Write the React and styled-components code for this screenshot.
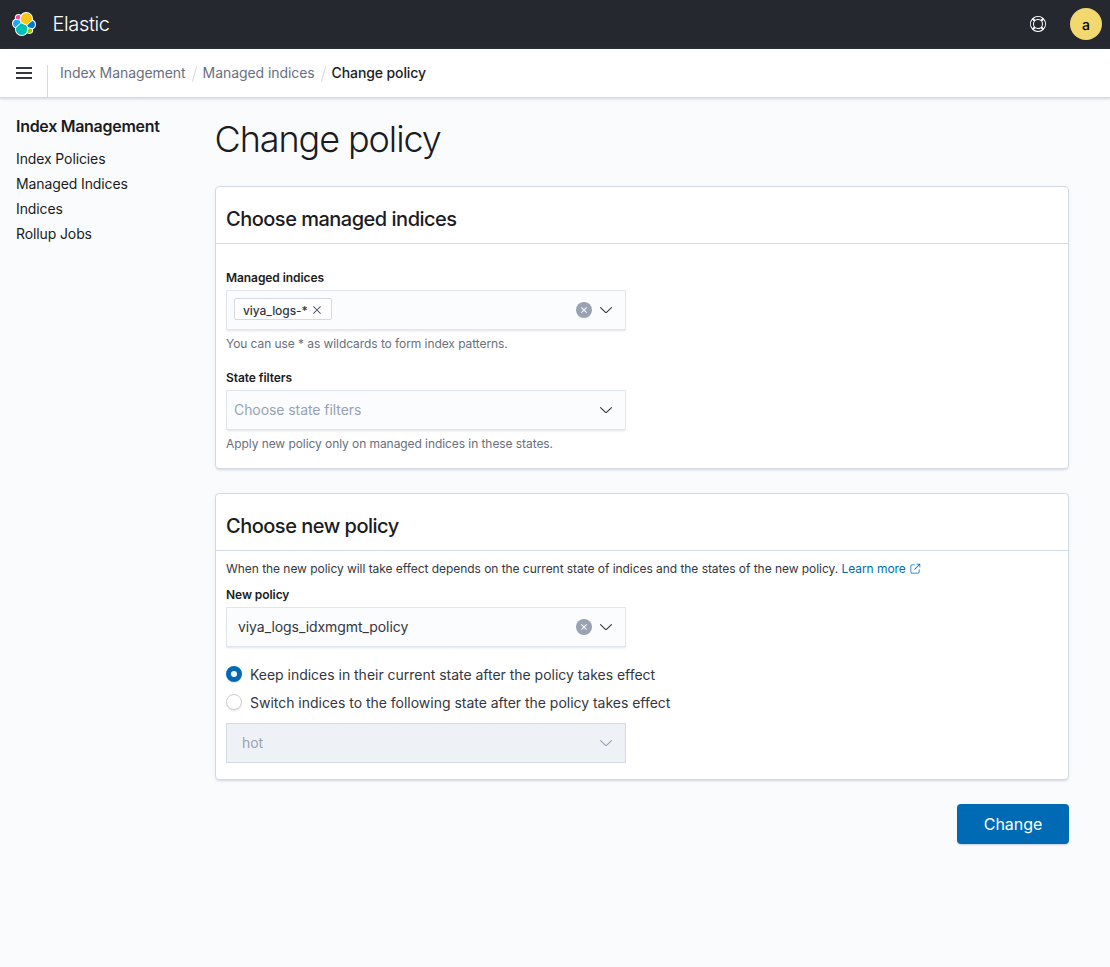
import React from "react";
import styled, { createGlobalStyle } from "styled-components";

const GlobalStyle = createGlobalStyle`
  *, *::before, *::after { box-sizing: border-box; }
  body {
    margin: 0;
    min-height: 100vh;
    background: #fafbfd;
    color: #343741;
    font-family: Inter, "Liberation Sans", sans-serif;
    font-size: 14px;
    letter-spacing: -0.005em;
    font-kerning: normal;
  }
  h1, h2, h3, p, ul { margin: 0; padding: 0; }
  button { font: inherit; letter-spacing: inherit; border: 0; padding: 0; background: none; cursor: pointer; }
`;

const TopBar = styled.header`
  height: 49px;
  background: #25282f;
  display: flex;
  align-items: center;
  padding: 0 8px 1px 12px;
`;

const Brand = styled.span`
  flex: 1;
  margin-left: 16.5px;
  font-size: 20px;
  font-weight: 300;
  line-height: 24px;
  letter-spacing: -0.018em;
  color: #fff;
`;

const Avatar = styled.span`
  width: 32px;
  height: 32px;
  margin-left: 24px;
  border-radius: 50%;
  background: #f1d86f;
  color: #000;
  font-weight: 500;
  line-height: 34px;
  text-align: center;
`;

const NavBar = styled.nav`
  height: 48px;
  background: #fff;
  display: flex;
  box-shadow: 0 1px 0 #d3dae6, 0 2px 2px rgba(152, 162, 179, 0.3), 0 1px 5px rgba(152, 162, 179, 0.2);
  position: relative;
`;

const MenuButton = styled.button`
  width: 48px;
  height: 32px;
  margin-top: 16px;
  padding: 0 0 16px 16px;
  border-right: 1px solid #d3dae6;
  display: flex;
  color: #343741;
`;

const Crumbs = styled.div`
  display: flex;
  align-items: center;
  height: 48px;
  padding-left: 12px;
`;

const Crumb = styled.span`
  margin-top: -1px;
  color: ${(p) => (p.$current ? "#1a1c21" : "#69707d")};
  font-weight: ${(p) => (p.$current ? 500 : 400)};
  letter-spacing: ${(p) => (p.$current ? "-0.008em" : "inherit")};
`;

const Slash = styled.span`
  width: 1px;
  height: 16px;
  margin: 1px 8px 0;
  background: #d3dae6;
  transform: rotate(15deg);
`;

const Page = styled.div`
  display: flex;
  padding: 18px 41px 0 16px;
`;

const Sidebar = styled.aside`
  width: 199px;
  flex: none;
`;

const SideTitle = styled.h3`
  font-size: 16px;
  font-weight: 600;
  line-height: 24px;
  letter-spacing: -0.018em;
  color: #1a1c21;
  margin: -1px 0 8px;
`;

const SideItem = styled.a`
  display: block;
  height: 25px;
  line-height: 25px;
  letter-spacing: -0.008em;
  color: #1a1c21;
`;

const Main = styled.main`
  flex: 1;
  display: flex;
  flex-direction: column;
`;

const PageTitle = styled.h1`
  font-size: 36px;
  font-weight: 300;
  line-height: 48px;
  letter-spacing: -0.03em;
  color: #1a1c21;
  margin: 0 0 23px -0.5px;
`;

const Panel = styled.section`
  height: ${(p) => p.$height}px;
  margin-bottom: 24px;
  border: 1px solid #d3dae6;
  border-radius: 4px;
  background: #fff;
  box-shadow: 0 2px 2px -1px rgba(152, 162, 179, 0.3), 0 1px 5px -2px rgba(152, 162, 179, 0.3);
`;

const PanelTitle = styled.h2`
  height: 57px;
  padding: 16px 10px 0;
  border-bottom: 1px solid #d3dae6;
  font-size: 20px;
  font-weight: 500;
  line-height: 32px;
  letter-spacing: -0.025em;
  color: #1a1c21;
`;

const PanelBody = styled.div`
  padding: ${(p) => p.$top}px 10px 0;
`;

const Note = styled.p`
  font-size: 12px;
  line-height: 18px;
  letter-spacing: -0.004em;
  margin-bottom: 8px;
`;

const Link = styled.a`
  color: #006bb4;
  svg { vertical-align: -2px; margin-left: -0.5px; }
`;

const Field = styled.div`
  width: 400px;
  margin-bottom: ${(p) => p.$gap || 16}px;
`;

const Label = styled.label`
  display: block;
  font-size: 12px;
  font-weight: 600;
  line-height: 18px;
  margin-bottom: 3px;
  color: #1a1c21;
`;

const Control = styled.div`
  width: 400px;
  height: 40px;
  padding: 0 11px 0 ${(p) => p.$indent}px;
  display: flex;
  align-items: center;
  gap: 6px;
  border: 1px solid ${(p) => (p.$disabled ? "#d3dae6" : "#e0e5ee")};
  background: ${(p) => (p.$disabled ? "#eef1f6" : "#fbfcfd")};
  color: ${(p) => (p.$disabled ? "#98a2b3" : "#343741")};
  box-shadow: ${(p) => (p.$disabled ? "none" : "0 2px 2px -1px rgba(152, 162, 179, 0.3)")};
`;

const Value = styled.span`
  flex: 1;
  margin-top: -1px;
  color: ${(p) => (p.$placeholder ? "#98a2b3" : "inherit")};
`;

const PillSlot = styled.div`
  flex: 1;
  display: flex;
`;

const Pill = styled.span`
  height: 22px;
  margin-top: -2px;
  padding: 2px 8px 0;
  display: flex;
  align-items: center;
  gap: 3px;
  border: 1px solid #d3dae6;
  border-radius: 2px;
  background: #fff;
  font-size: 12px;
  font-weight: 500;
  svg { margin-top: -1px; }
`;

const ClearButton = styled.button`
  width: 16px;
  height: 16px;
  border-radius: 50%;
  background: #98a2b3;
  color: #fff;
  display: flex;
  align-items: center;
  justify-content: center;
`;

const Help = styled.p`
  padding-top: 5px;
  font-size: 12px;
  line-height: 18px;
  color: #69707d;
`;

const Radios = styled.div`
  margin-bottom: 1px;
`;

const RadioRow = styled.label`
  height: 28px;
  display: flex;
  align-items: flex-start;
  gap: 8px;
  line-height: 18px;
  letter-spacing: -0.0015em;
`;

const RadioDot = styled.span`
  width: 16px;
  height: 16px;
  border-radius: 50%;
  border: ${(p) => (p.$checked ? "5px solid #006bb4" : "1px solid #c9cbcd")};
  background: #fff;
  box-shadow: 0 2px 2px -1px rgba(152, 162, 179, 0.3);
`;

const SubmitButton = styled.button`
  align-self: flex-end;
  width: 112px;
  height: 40px;
  border-radius: 4px;
  background: #006bb4;
  color: #fff;
  font-size: 16px;
  box-shadow: 0 2px 2px -1px rgba(54, 97, 126, 0.3);
`;

const logoParts = [
  ["#fec514", "M12.58 13.787l7.002 3.211 7.066-6.213a7.849 7.849 0 00.152-1.557c0-4.287-3.464-7.777-7.72-7.777a7.713 7.713 0 00-6.377 3.385L11.53 10.9l1.05 2.886z"],
  ["#00bfb3", "M5.333 21.215A7.853 7.853 0 005.18 22.8c0 4.3 3.473 7.797 7.742 7.797a7.724 7.724 0 006.407-3.424l1.166-6.118-1.557-2.996-7.03-3.224z"],
  ["#f04e98", "M5.288 9.067l4.8 1.143 1.05-5.497a3.8 3.8 0 00-2.296-.78 3.817 3.817 0 00-3.799 3.83c0 .445.084.888.245 1.304z"],
  ["#1ba9f5", "M4.87 10.214a5.324 5.324 0 00-3.541 5.026 5.343 5.343 0 003.418 4.985l6.734-6.138-1.236-2.664z"],
  ["#93c90e", "M20.872 27.173a3.781 3.781 0 002.283.779 3.817 3.817 0 003.799-3.83c0-.455-.08-.9-.244-1.322l-4.796-1.131z"],
  ["#07c", "M21.847 20.45l5.28 1.244a5.325 5.325 0 003.544-5.027 5.341 5.341 0 00-3.425-4.978l-6.906 6.092z"],
];

const Logo = () => (
  <svg width="24" height="24" viewBox="0 0 32 32">
    {logoParts.map(([fill, d]) => (
      <path key={fill} d={d} fill="#fff" stroke="#fff" strokeWidth="2.6" strokeLinejoin="round" />
    ))}
    {logoParts.map(([fill, d]) => (
      <path key={fill} d={d} fill={fill} />
    ))}
  </svg>
);

const iconPaths = {
  help: "M13.6 12.186l-1.357-1.358c-.025-.025-.058-.034-.084-.056.53-.794.84-1.746.84-2.773a4.977 4.977 0 00-.84-2.772c.026-.02.059-.03.084-.056L13.6 3.813a6.96 6.96 0 010 8.373zM8 15a6.956 6.956 0 01-4.186-1.4l1.358-1.358c.025-.025.035-.057.055-.084C6.02 12.688 6.974 13 8 13a4.978 4.978 0 002.773-.84c.02.026.03.058.056.083l1.357 1.358A6.956 6.956 0 018 15zm-5.601-2.813a6.963 6.963 0 010-8.373l1.359 1.358c.024.025.057.035.084.055A4.97 4.97 0 003 8c0 1.027.31 1.98.842 2.773-.027.02-.06.03-.084.055l-1.36 1.358zm5.6-.187A4 4 0 118 4a4 4 0 010 8zM8 1c1.573 0 3.019.525 4.187 1.4l-1.357 1.357c-.025.025-.035.057-.056.084A4.979 4.979 0 008 3a4.979 4.979 0 00-2.773.842c-.02-.027-.03-.06-.055-.084L3.814 2.4A6.957 6.957 0 018 1zm0-1a8.001 8.001 0 10.003 16.002A8.001 8.001 0 008 0z",
  menu: "M0 2h16v2H0zM0 7h16v2H0zM0 12h16v2H0z",
  arrowDown: "M13.069 5.157L8.384 9.768a.546.546 0 01-.768 0L2.93 5.158a.552.552 0 00-.771 0 .53.53 0 000 .759l4.684 4.61a1.65 1.65 0 002.312 0l4.684-4.61a.53.53 0 000-.76.552.552 0 00-.771 0z",
  cross: "M7.293 8L3.146 3.854a.5.5 0 11.708-.708L8 7.293l4.146-4.147a.5.5 0 01.708.708L8.707 8l4.147 4.146a.5.5 0 01-.708.708L8 8.707l-4.146 4.147a.5.5 0 01-.708-.708L7.293 8z",
  popout: "M13 8.5a.5.5 0 111 0V12a2 2 0 01-2 2H4a2 2 0 01-2-2V4a2 2 0 012-2h3.5a.5.5 0 010 1H4a1 1 0 00-1 1v8a1 1 0 001 1h8a1 1 0 001-1V8.5zm-5.12.339a.5.5 0 11-.706-.707L13.305 2H10.5a.5.5 0 110-1H14a1 1 0 011 1v3.5a.5.5 0 11-1 0V2.72L7.88 8.838z",
};

const Icon = ({ name, size = 16, weight = 0, color = "currentColor" }) => (
  <svg width={size} height={size} viewBox="0 0 16 16" fill={color} stroke={color} strokeWidth={weight} fillRule={name === "help" ? "evenodd" : undefined}>
    <path d={iconPaths[name]} />
  </svg>
);

const Clear = () => (
  <ClearButton aria-label="Clear">
    <Icon name="cross" size={8} weight={1.4} />
  </ClearButton>
);

const sideItems = ["Index Policies", "Managed Indices", "Indices", "Rollup Jobs"];

export default function App() {
  return (
    <>
      <GlobalStyle />
      <TopBar>
        <Logo />
        <Brand>Elastic</Brand>
        <Icon name="help" color="#fff" />
        <Avatar>a</Avatar>
      </TopBar>
      <NavBar>
        <MenuButton aria-label="Menu"><Icon name="menu" /></MenuButton>
        <Crumbs>
          <Crumb>Index Management</Crumb>
          <Slash />
          <Crumb>Managed indices</Crumb>
          <Slash />
          <Crumb $current>Change policy</Crumb>
        </Crumbs>
      </NavBar>
      <Page>
        <Sidebar>
          <SideTitle>Index Management</SideTitle>
          {sideItems.map((item) => <SideItem key={item}>{item}</SideItem>)}
        </Sidebar>
        <Main>
          <PageTitle>Change policy</PageTitle>
          <Panel $height={283}>
            <PanelTitle>Choose managed indices</PanelTitle>
            <PanelBody $top={25}>
              <Field>
                <Label>Managed indices</Label>
                <Control $indent={7}>
                  <PillSlot>
                    <Pill>viya_logs-*<Icon name="cross" size={12} /></Pill>
                  </PillSlot>
                  <Clear />
                  <Icon name="arrowDown" />
                </Control>
                <Help>You can use * as wildcards to form index patterns.</Help>
              </Field>
              <Field>
                <Label>State filters</Label>
                <Control $indent={7}>
                  <Value $placeholder>Choose state filters</Value>
                  <Icon name="arrowDown" />
                </Control>
                <Help>Apply new policy only on managed indices in these states.</Help>
              </Field>
            </PanelBody>
          </Panel>
          <Panel $height={287}>
            <PanelTitle>Choose new policy</PanelTitle>
            <PanelBody $top={9}>
              <Note>
                When the new policy will take effect depends on the current state of indices and the states of the new policy.{" "}
                <Link>Learn more <Icon name="popout" size={12} /></Link>
              </Note>
              <Field $gap={19}>
                <Label>New policy</Label>
                <Control $indent={11}>
                  <Value>viya_logs_idxmgmt_policy</Value>
                  <Clear />
                  <Icon name="arrowDown" />
                </Control>
              </Field>
              <Radios>
                <RadioRow><RadioDot $checked />Keep indices in their current state after the policy takes effect</RadioRow>
                <RadioRow><RadioDot />Switch indices to the following state after the policy takes effect</RadioRow>
              </Radios>
              <Control $indent={15} $disabled>
                <Value>hot</Value>
                <Icon name="arrowDown" />
              </Control>
            </PanelBody>
          </Panel>
          <SubmitButton>Change</SubmitButton>
        </Main>
      </Page>
    </>
  );
}
